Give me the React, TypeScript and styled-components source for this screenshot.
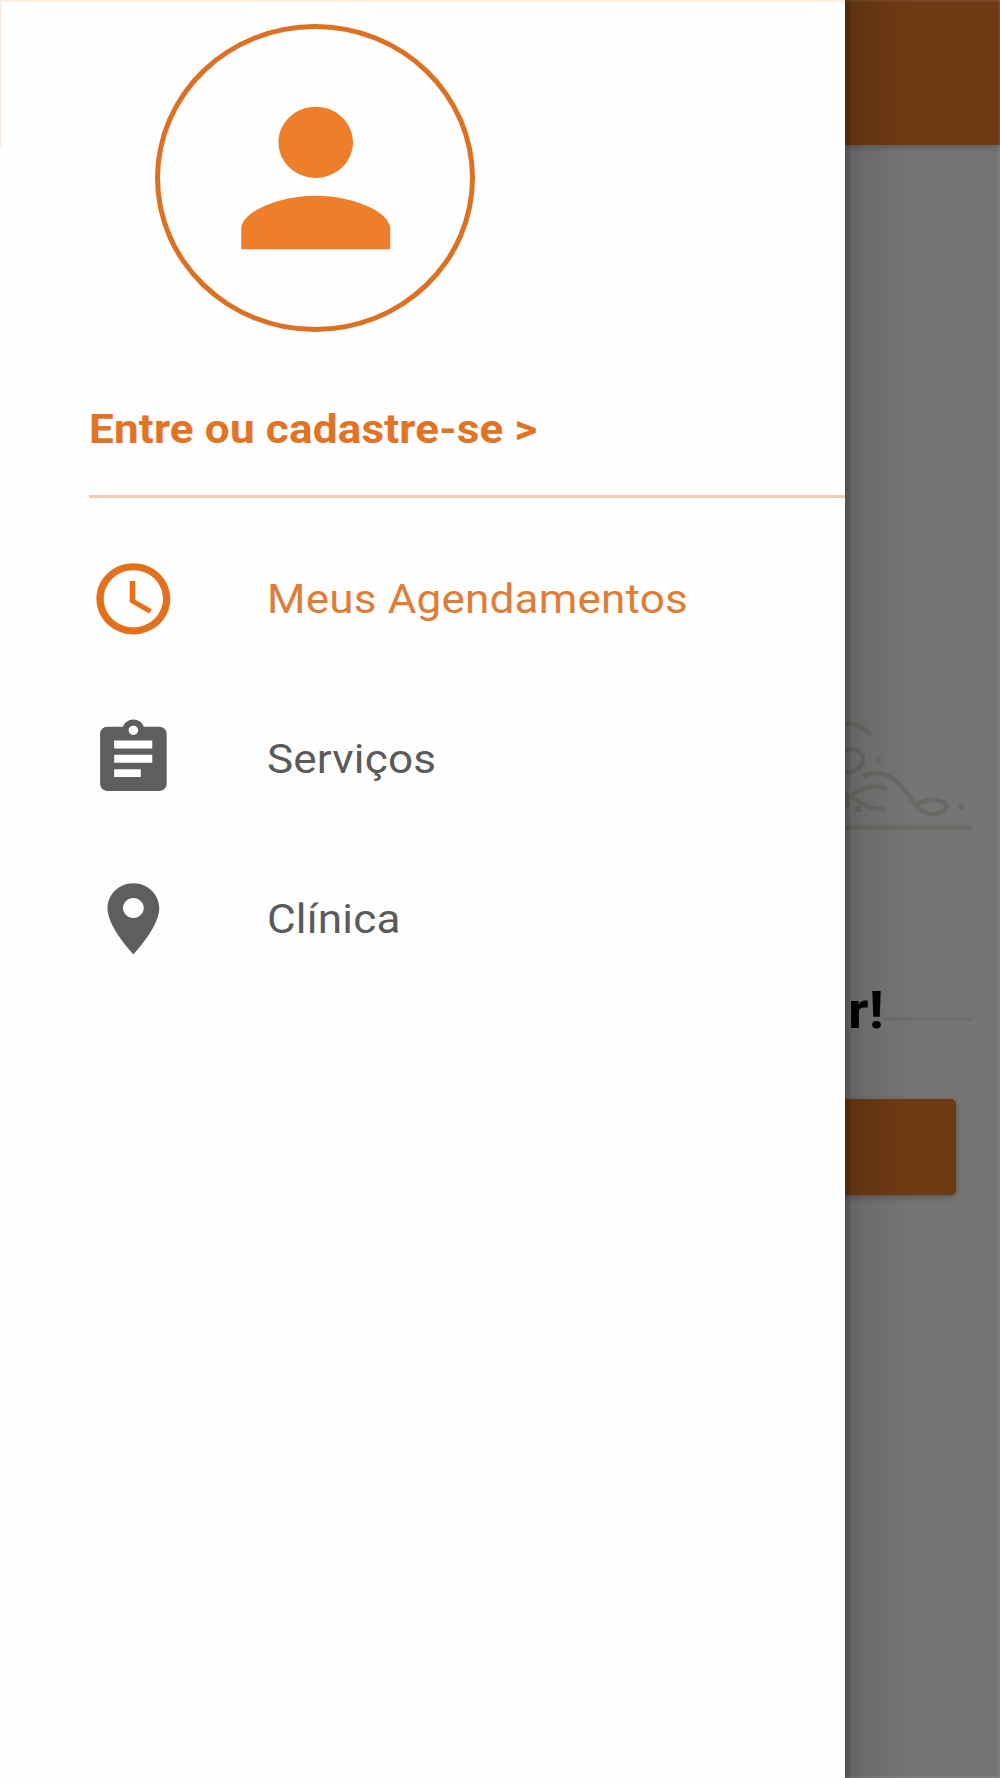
import React from 'react';
import styled, { createGlobalStyle } from 'styled-components';

const GlobalStyle = createGlobalStyle`
  *, *::before, *::after { box-sizing: border-box; }
  body { margin: 0; background: #757575; font-family: Roboto, "Liberation Sans", sans-serif; }
`;

const Screen = styled.div`
  display: flex;
  width: 1000px;
  height: 1778px;
  overflow: hidden;
`;

const Drawer = styled.aside`
  width: 844.5px;
  flex: none;
  display: flex;
  flex-direction: column;
  background:
    linear-gradient(#fceee3, #fceee3) 0 0 / 100% 2px no-repeat,
    linear-gradient(#fceee3, #fceee3) 0 0 / 2px 147px no-repeat,
    linear-gradient(#fafafa, #fafafa) 0 0 / 1px 100% no-repeat,
    #fefefe;
`;

const Avatar = styled.div`
  width: 320px;
  height: 308px;
  margin: 24px 0 0 155.3px;
  flex: none;
  display: flex;
  align-items: center;
  justify-content: center;
  border: 5px solid #dc7124;
  border-radius: 50%;
`;

const Glyph = styled.svg<{ $w: number; $h: number }>`
  width: ${(p) => p.$w}px;
  height: ${(p) => p.$h}px;
  flex: none;
  display: block;
  fill: currentColor;
`;

const Login = styled.a`
  height: 166px;
  margin-left: 88.5px;
  padding-top: 69px;
  border-bottom: 3px solid #f5cab0;
  color: #e27324;
  font-size: 41px;
  font-weight: 700;
  line-height: 56px;
  white-space: nowrap;
`;

const Label = styled.span`
  display: inline-block;
  letter-spacing: 0.15px;
  transform: scaleX(1.075);
  transform-origin: left center;
`;

const Menu = styled.nav`
  display: flex;
  flex-direction: column;
  margin-top: 20.5px;
`;

const Item = styled.a<{ $active?: boolean }>`
  height: 160px;
  display: flex;
  align-items: center;
  gap: 89px;
  padding-left: 88.8px;
  color: ${(p) => (p.$active ? '#df7d38' : '#5a5a5a')};
  font-size: 41px;
  line-height: 56px;
  white-space: nowrap;
`;

const IconSlot = styled.span<{ $active?: boolean }>`
  color: ${(p) => (p.$active ? '#e3701c' : '#5e5e5e')};
`;

const Backdrop = styled.main`
  position: relative;
  flex: 1;
  display: flex;
  flex-direction: column;
  overflow: hidden;
  background: #fff;
`;

const Scrim = styled.div`
  position: absolute;
  inset: 0;
  background:
    linear-gradient(90deg, rgba(0, 0, 0, 0.32) 0, rgba(0, 0, 0, 0.25) 4px, rgba(0, 0, 0, 0.14) 6px, rgba(0, 0, 0, 0.08) 22px, rgba(0, 0, 0, 0.03) 45px, transparent 70px),
    linear-gradient(rgba(255, 255, 255, 0.08), rgba(255, 255, 255, 0.08)) 0 0 / 100% 2px no-repeat,
    linear-gradient(rgba(255, 255, 255, 0.06), rgba(255, 255, 255, 0.06)) 100% 0 / 2px 100% no-repeat,
    linear-gradient(rgba(255, 255, 255, 0.06), rgba(255, 255, 255, 0.06)) 0 100% / 100% 2px no-repeat,
    rgba(0, 0, 0, 0.54);
`;

const AppBar = styled.header`
  height: 144.5px;
  background: #ef7e2b;
  box-shadow: 0 1px 8px rgba(0, 0, 0, 0.3);
`;

const Ornament = styled.svg`
  width: 127px;
  height: 120px;
  margin-top: 571.5px;
  fill: none;
  stroke: #ebe5db;
  stroke-width: 4.5;
`;

const Greeting = styled.div`
  height: 80px;
  margin-top: 135px;
  display: flex;
  align-items: center;
  padding-left: 3px;
  width: 127px;
  color: #000;
  font-size: 52px;
  font-weight: 700;
  line-height: 80px;
`;

const Rule = styled.span`
  flex: 1;
  height: 4px;
  margin: 16px 0 0 2px;
  background: #f0eee6;
`;

const Action = styled.div`
  width: 111px;
  height: 95.5px;
  margin-top: 48px;
  border-radius: 0 5px 5px 0;
  background: #ef7e2b;
  box-shadow: 0 2px 6px rgba(0, 0, 0, 0.3);
`;

const items = [
  {
    label: 'Meus Agendamentos',
    active: true,
    path: 'M11.99 2C6.47 2 2 6.48 2 12s4.47 10 9.99 10C17.52 22 22 17.52 22 12S17.52 2 11.99 2zM12 20c-4.42 0-8-3.58-8-8s3.58-8 8-8 8 3.58 8 8-3.58 8-8 8zM12.5 7H11v6l5.25 3.15.75-1.23-4.5-2.67z',
  },
  {
    label: 'Serviços',
    path: 'M19 3h-4.18C14.4 1.84 13.3 1 12 1c-1.3 0-2.4.84-2.82 2H5c-1.1 0-2 .9-2 2v14c0 1.1.9 2 2 2h14c1.1 0 2-.9 2-2V5c0-1.1-.9-2-2-2zm-7-.3c.72 0 1.3.58 1.3 1.3s-.58 1.3-1.3 1.3-1.3-.58-1.3-1.3.58-1.3 1.3-1.3zM14 17.1H6.8v-2.2h7.2v2.2zm3.1-4H6.8v-2.2h10.3v2.2zm0-4H6.8V6.9h10.3v2.2z',
  },
  {
    label: 'Clínica',
    path: 'M12 2C8.13 2 5 5.13 5 9c0 4.8 5.3 11 7 13 1.7-2 7-8.2 7-13 0-3.87-3.13-7-7-7zm0 9.8c-1.55 0-2.8-1.25-2.8-2.8s1.25-2.8 2.8-2.8 2.8 1.25 2.8 2.8-1.25 2.8-2.8 2.8z',
  },
];

export default function App() {
  return (
    <>
      <GlobalStyle />
      <Screen>
        <Drawer>
          <Avatar>
            <Glyph $w={223.5} $h={214} viewBox="0 0 24 24" preserveAspectRatio="none" color="#ed7e2a">
              <path d="M12 12c2.21 0 4-1.79 4-4s-1.79-4-4-4-4 1.79-4 4 1.79 4 4 4zm0 2c-4 0-8 1.8-8 3.7V20h16v-2.3C20 15.8 16 14 12 14z" />
            </Glyph>
          </Avatar>
          <Login>
            <Label>Entre ou cadastre-se &gt;</Label>
          </Login>
          <Menu>
            {items.map((item) => (
              <Item key={item.label} $active={item.active}>
                <IconSlot $active={item.active}>
                  <Glyph $w={88.8} $h={85.6} viewBox="0 0 24 24" preserveAspectRatio="none">
                    <path d={item.path} />
                  </Glyph>
                </IconSlot>
                <Label>{item.label}</Label>
              </Item>
            ))}
          </Menu>
        </Drawer>
        <Backdrop>
          <AppBar />
          <Ornament viewBox="0 0 127 120">
            <path d="M0 8 Q14 6 26 19" />
            <path d="M0 34 C24 28 24 58 0 56" />
            <path d="M0 86 C16 68 36 68 42 74 M4 78 Q20 94 40 93 M0 76 Q5 84 2 91" />
            <path d="M18 60 C44 48 60 74 70 88 C82 104 100 98 102 90 C98 80 76 84 70 90" />
            <path d="M31 44h5M114 91h5M10 93h6" strokeWidth="6" />
            <path d="M0 111.5H127" />
          </Ornament>
          <Greeting>
            <Label>r!</Label>
            <Rule />
          </Greeting>
          <Action />
          <Scrim />
        </Backdrop>
      </Screen>
    </>
  );
}
